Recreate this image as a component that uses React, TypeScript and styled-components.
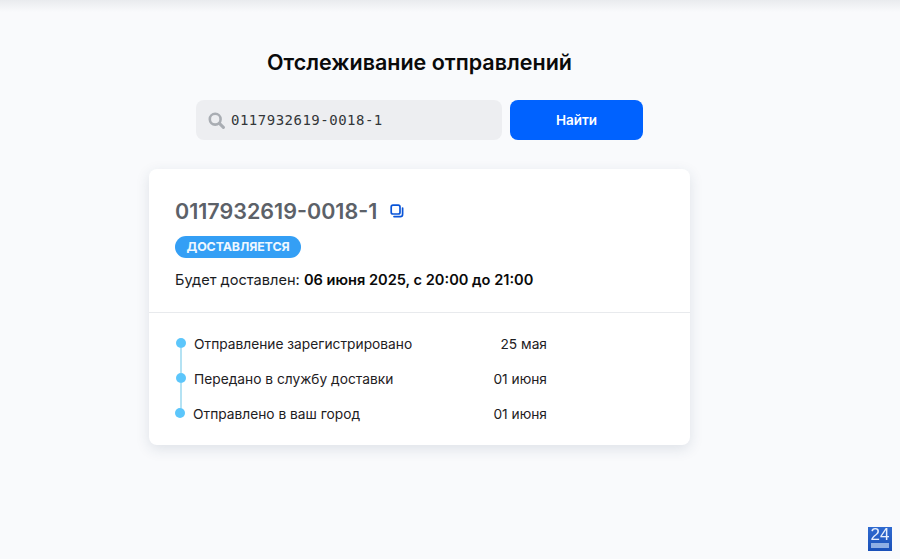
import * as React from "react";
import styled, { createGlobalStyle } from "styled-components";

const GlobalStyle = createGlobalStyle`
    html, body {
        margin: 0;
        padding: 0;
        height: 100%;
        background: #f9fafc;
        font-family: "Inter", "Noto Sans", sans-serif;
    }
    * {
        box-sizing: border-box;
    }
`;

const Page = styled.div`
    width: 100%;
    height: 559px;
    overflow: hidden;
    display: flex;
    flex-direction: column;
    background: #f9fafc;
`;

const TopShade = styled.div`
    height: 12px;
    flex-shrink: 0;
    background: linear-gradient(#e9ebee, #f9fafc);
`;

const Content = styled.main`
    width: 839px;
    display: flex;
    flex-direction: column;
    align-items: center;
    padding-top: 36px;
`;

const Title = styled.h1`
    margin: 0;
    height: 28px;
    font-size: 21.5px;
    line-height: 28px;
    font-weight: 600;
    color: #0a0a0a;
`;

const SearchRow = styled.form`
    display: flex;
    gap: 8px;
    margin-top: 24px;
`;

const SearchField = styled.div`
    width: 306px;
    height: 40px;
    display: flex;
    align-items: center;
    gap: 6px;
    padding-left: 12px;
    border-radius: 8px;
    background: #edeef1;
    color: #a9adb3;
`;

const SearchInput = styled.input`
    flex: 1;
    min-width: 0;
    border: 0;
    padding: 0;
    outline: 0;
    background: transparent;
    font-family: "DejaVu Sans Mono", monospace;
    font-size: 14px;
    letter-spacing: 0.5px;
    color: #333639;
`;

const SearchButton = styled.button`
    width: 133px;
    height: 40px;
    border: 0;
    border-radius: 8px;
    background: #0062ff;
    color: #fff;
    font-family: inherit;
    font-size: 13.5px;
    font-weight: 600;
`;

const Card = styled.section`
    width: 541px;
    height: 276px;
    margin-top: 29px;
    border-radius: 8px;
    background: #fff;
    box-shadow: 0 4px 14px rgba(40, 60, 90, 0.13);
`;

const Summary = styled.div`
    height: 144px;
    padding: 27px 26px 0;
    border-bottom: 1px solid #e8eaed;
`;

const NumberRow = styled.div`
    display: flex;
    align-items: center;
    gap: 13px;
    height: 30px;
`;

const TrackNumber = styled.span`
    font-size: 21.5px;
    font-weight: 600;
    color: #5c6168;
`;

const CopyButton = styled.span`
    display: flex;
    color: #0a55d8;
`;

const StatusBadge = styled.div`
    width: 126px;
    height: 22px;
    margin-top: 10px;
    border-radius: 11px;
    background: #349ff5;
    color: #eef7ff;
    font-size: 12.4px;
    line-height: 22px;
    font-weight: 700;
    letter-spacing: -0.1px;
    text-align: center;
`;

const Delivery = styled.p`
    margin: 12px 0 0;
    font-size: 14.6px;
    line-height: 20px;
    color: #1a1c1f;
    white-space: nowrap;

    b {
        font-weight: 600;
        color: #0a0a0a;
    }
`;

const Steps = styled.ul`
    list-style: none;
    margin: 0;
    padding: 13px 0 0 26px;
`;

const Step = styled.li<{ $shift?: number }>`
    position: relative;
    width: 372px;
    height: 35px;
    display: flex;
    align-items: center;
    justify-content: space-between;
    padding-left: ${(p) => 19 - (p.$shift || 0)}px;
    font-size: 13.75px;
    color: #1e2023;

    &::before {
        content: "";
        position: absolute;
        left: ${(p) => 1 - (p.$shift || 0)}px;
        top: 12px;
        width: 10px;
        height: 10px;
        border-radius: 50%;
        background: #5cc6fb;
    }

    &:not(:last-child)::after {
        content: "";
        position: absolute;
        left: 5px;
        top: 22px;
        width: 2px;
        height: 25px;
        background: #b4e2f3;
    }
`;

const Widget = styled.div`
    position: fixed;
    right: 8px;
    bottom: 8px;
    width: 24px;
    height: 24px;
    display: flex;
    flex-direction: column;
    align-items: center;
    background: linear-gradient(#2f6ad0, #1a50b8);
    color: #e8effc;
    font-family: "Liberation Sans", sans-serif;
    font-size: 17px;
    line-height: 16px;
`;

const WidgetBar = styled.div`
    width: 18px;
    height: 5px;
    background: #8fafe4;
`;

const steps = [
    { title: "Отправление зарегистрировано", date: "25 мая" },
    { title: "Передано в службу доставки", date: "01 июня" },
    { title: "Отправлено в ваш город", date: "01 июня", shift: 1 },
];

export default function App() {
    return (
        <Page>
            <GlobalStyle />
            <TopShade />
            <Content>
                <Title>Отслеживание отправлений</Title>
                <SearchRow onSubmit={(e) => e.preventDefault()}>
                    <SearchField>
                        <svg width="17" height="17" viewBox="0 0 17 17" fill="none" stroke="currentColor">
                            <circle cx="7.2" cy="7.2" r="5.4" strokeWidth="2.6" />
                            <path d="M11.4 11.4L15.4 15.4" strokeWidth="3" strokeLinecap="round" />
                        </svg>
                        <SearchInput defaultValue="0117932619-0018-1" />
                    </SearchField>
                    <SearchButton type="submit">Найти</SearchButton>
                </SearchRow>
                <Card>
                    <Summary>
                        <NumberRow>
                            <TrackNumber>0117932619-0018-1</TrackNumber>
                            <CopyButton>
                                <svg width="14" height="14" viewBox="0 0 14 14" fill="none" stroke="currentColor" strokeWidth="1.7">
                                    <path d="M4 12.6h6.2a2.4 2.4 0 0 0 2.4-2.4V4" strokeLinecap="round" />
                                    <rect x="1.2" y="1.2" width="8.8" height="8.8" rx="1.8" />
                                </svg>
                            </CopyButton>
                        </NumberRow>
                        <StatusBadge>ДОСТАВЛЯЕТСЯ</StatusBadge>
                        <Delivery>
                            Будет доставлен: <b>06 июня 2025, с 20:00 до 21:00</b>
                        </Delivery>
                    </Summary>
                    <Steps>
                        {steps.map((step) => (
                            <Step key={step.title} $shift={step.shift}>
                                <span>{step.title}</span>
                                <span>{step.date}</span>
                            </Step>
                        ))}
                    </Steps>
                </Card>
            </Content>
            <Widget>
                24
                <WidgetBar />
            </Widget>
        </Page>
    );
}
